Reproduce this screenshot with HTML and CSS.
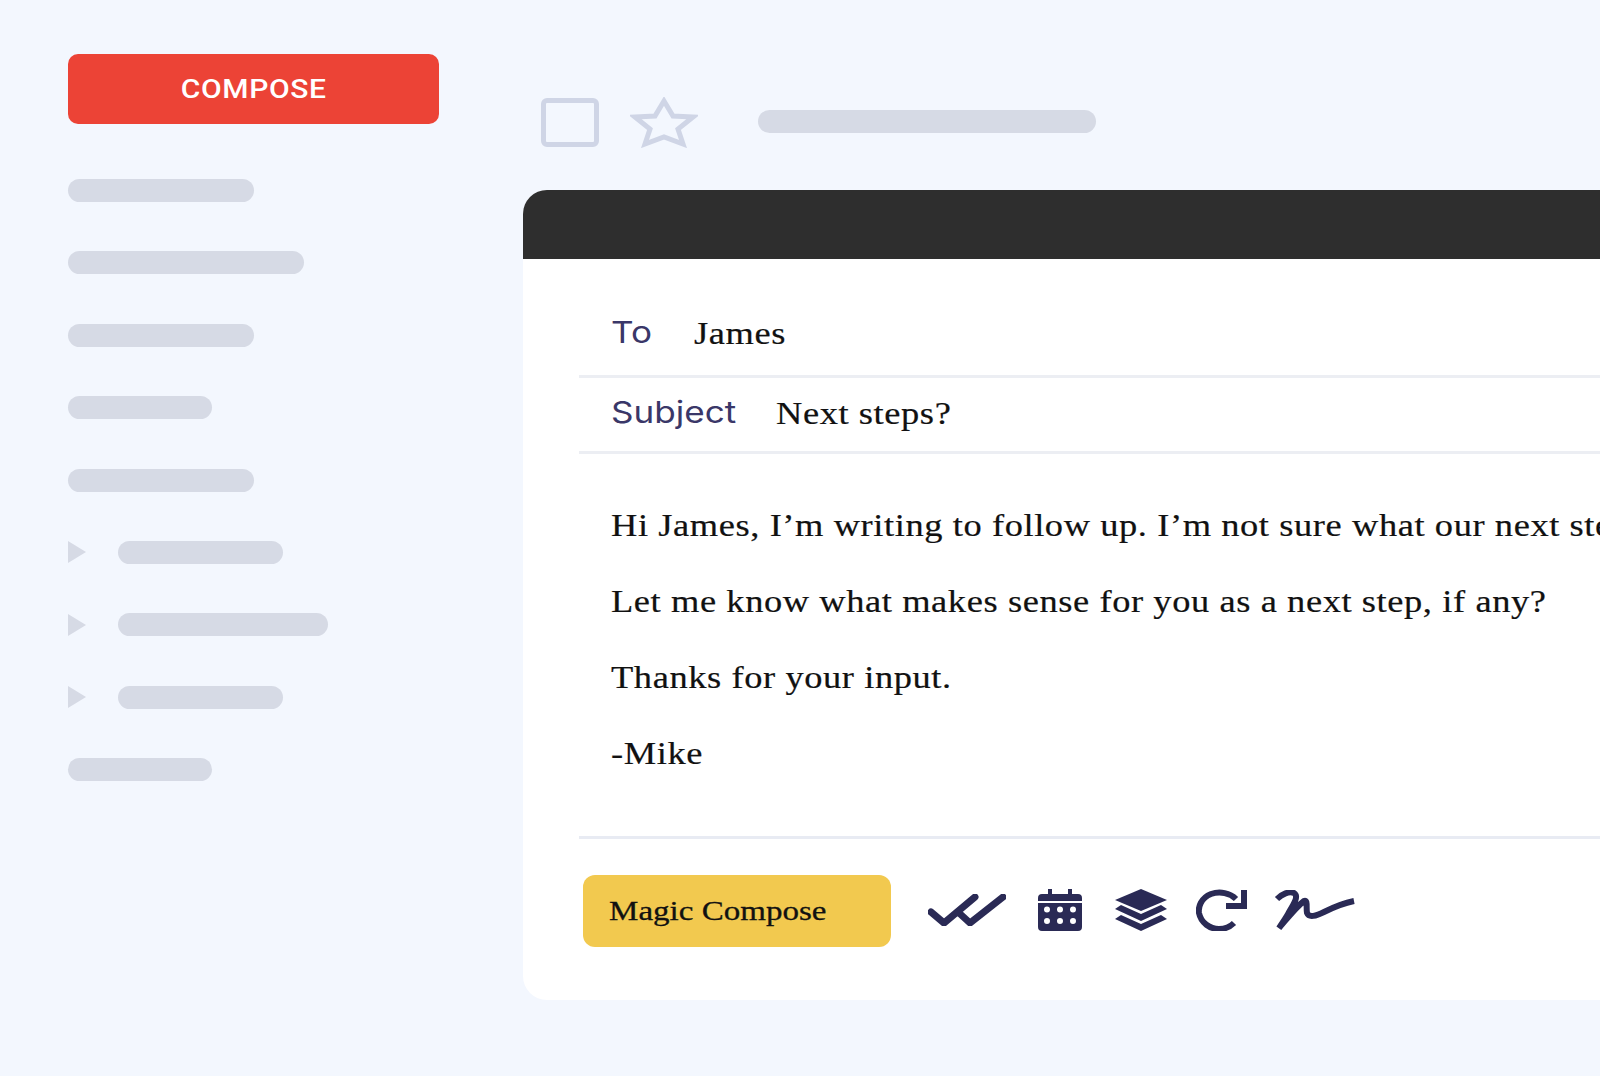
FILE: index.html
```html
<!DOCTYPE html>
<html lang="en">
  <head>
    <meta charset="UTF-8" />
    <meta name="viewport" content="width=device-width, initial-scale=1.0" />
    <title>Magic Compose</title>
    <link rel="stylesheet" href="styles.css">
  </head>
  <body>
    <div class="app">
      <aside class="sidebar">
        <button class="compose-btn"><span>COMPOSE</span></button>
        <ul class="nav">
          <li class="nav-item"><span class="bar w-186"></span></li>
          <li class="nav-item"><span class="bar w-236"></span></li>
          <li class="nav-item"><span class="bar w-186"></span></li>
          <li class="nav-item"><span class="bar w-144"></span></li>
          <li class="nav-item"><span class="bar w-186"></span></li>
          <li class="nav-item"><span class="arrow"></span><span class="bar w-165"></span></li>
          <li class="nav-item"><span class="arrow"></span><span class="bar w-210"></span></li>
          <li class="nav-item"><span class="arrow"></span><span class="bar w-165"></span></li>
          <li class="nav-item"><span class="bar w-144"></span></li>
        </ul>
      </aside>

      <main class="main">
        <div class="toolbar">
          <span class="checkbox"></span>
          <svg class="star" viewBox="0 0 68 51" preserveAspectRatio="none">
            <polygon points="34 4 43 19 63 20 48 32 53 47 34 40 15 47 20 32 5 20 25 19" />
          </svg>
          <span class="bar subject-bar"></span>
        </div>

        <section class="card">
          <div class="card-head"></div>
          <div class="field field-to">
            <span class="label label-to">To</span>
            <span class="value">James</span>
          </div>
          <div class="field field-subject">
            <span class="label label-subject">Subject</span>
            <span class="value">Next steps?</span>
          </div>
          <div class="message">
            <p>Hi James, I’m writing to follow up. I’m not sure what our next steps are.</p>
            <p>Let me know what makes sense for you as a next step, if any?</p>
            <p>Thanks for your input.</p>
            <p>-Mike</p>
          </div>
          <div class="card-foot">
            <button class="magic-btn"><span>Magic Compose</span></button>
            <svg class="icon icon-check" viewBox="0 0 78 32">
              <path d="M3 18 L16 29 L47 3 M30 18 L42 29 L75 3" />
            </svg>
            <svg class="icon icon-calendar" viewBox="0 0 44 42">
              <path d="M10 0h4v5h16V0h4v5h6a4 4 0 0 1 4 4v3H0V9a4 4 0 0 1 4-4h6z" />
              <path fill-rule="evenodd" d="M0 14h44v24a4 4 0 0 1-4 4H4a4 4 0 0 1-4-4z M6 20.500a3 3 0 1 0 6 0a3 3 0 1 0-6 0z M19 20.500a3 3 0 1 0 6 0a3 3 0 1 0-6 0z M32 20.500a3 3 0 1 0 6 0a3 3 0 1 0-6 0z M6 32a3 3 0 1 0 6 0a3 3 0 1 0-6 0z M19 32a3 3 0 1 0 6 0a3 3 0 1 0-6 0z M32 32a3 3 0 1 0 6 0a3 3 0 1 0-6 0z" />
            </svg>
            <svg class="icon icon-layers" viewBox="0 0 52 42">
              <polygon points="26 0 52 11 26 22 0 11" />
              <polygon points="6 16 26 25 46 16 52 20 26 32 0 20" />
              <polygon points="6 26 26 35 46 26 52 30 26 42 0 30" />
            </svg>
            <svg class="icon icon-redo" viewBox="0 0 52 42">
              <path class="line" d="M40 10 C34 4 24 2 15 5 C5 9 2 18 3 24 C5 34 14 40 23 40 C29 40 34 38 38 34" />
              <path d="M45 1 h6 v19 h-21 v-6 h15 z" />
            </svg>
            <svg class="icon icon-sign" viewBox="0 0 82 40">
              <path class="line" d="M3 9 C8 4 15 1 20 3 C25 6 20 14 15 22 C12 28 8 33 5 38 C12 30 22 17 30 11 C34 9 32 18 33 23 C35 28 42 26 50 22 C60 17 70 13 80 11" />
            </svg>
          </div>
        </section>
      </main>
    </div>
  </body>
</html>
```

FILE: styles.css
```css
html,
body {
  margin: 0;
  height: 100%;
  overflow: hidden;
  background: #f3f7fe;
}

.app {
  display: flex;
  height: 1076px;
}

/* left column */
.sidebar {
  flex: 0 0 523px;
  box-sizing: border-box;
  padding: 54px 0 0 68px;
}
.compose-btn {
  display: block;
  width: 371px;
  height: 70px;
  padding: 0;
  border: 0;
  border-radius: 10px;
  background: #ec4336;
  color: #fff;
  font: 500 25px Roboto, sans-serif;
  letter-spacing: 0.5px;
}
/* the text in the shot is stretched sideways */
.compose-btn span {
  display: inline-block;
  transform: scaleX(1.2);
}
.nav {
  display: flex;
  flex-direction: column;
  gap: 49.4px;
  margin: 55px 0 0;
  padding: 0;
  list-style: none;
}
.nav-item {
  display: flex;
  align-items: center;
  height: 23px;
}
.arrow {
  width: 0;
  height: 0;
  margin-right: 32px;
  border-top: 11px solid transparent;
  border-bottom: 11px solid transparent;
  border-left: 18px solid #d6dae5;
}

.bar {
  display: block;
  height: 23px;
  border-radius: 12px;
  background: #d6dae5;
}
.w-144 { width: 144px; }
.w-165 { width: 165px; }
.w-186 { width: 186px; }
.w-210 { width: 210px; }
.w-236 { width: 236px; }

/* right column */
.main {
  flex: 1;
  min-width: 0;
  padding-top: 97px;
}
.toolbar {
  display: flex;
  align-items: center;
  height: 51px;
  padding-left: 18px;
}
.checkbox {
  box-sizing: border-box;
  width: 58px;
  height: 49px;
  border: 5px solid #cfd5e6;
  border-radius: 6px;
}
.star {
  width: 68px;
  height: 51px;
  margin-left: 31px;
  fill: none;
  stroke: #cfd5e6;
  stroke-width: 5;
}
.subject-bar {
  width: 338px;
  margin: -3px 0 0 60px;
}

.card {
  margin-top: 42px;
  height: 810px;
  border-radius: 24px 0 0 24px;
  background: #fff;
  overflow: hidden;
}
.card-head {
  height: 69px;
  background: #2e2e2e;
}
.field {
  display: flex;
  align-items: center;
  box-sizing: border-box;
  margin-left: 56px;
  padding-left: 32px;
  border-bottom: 3px solid #eceef3;
}
.field-to {
  height: 119px;
  padding-top: 34px;
}
.field-subject {
  height: 76px;
  padding-bottom: 2px;
}
.label {
  color: #3a3768;
  font: 30px Inter, sans-serif;
  transform: scaleX(1.17);
  transform-origin: left;
}
.label-to {
  width: 83px;
  margin-top: -4px;
}
.label-subject {
  width: 165px;
  margin-top: -4px;
}
.value {
  color: #111;
  font: 31px "Liberation Serif", serif;
  letter-spacing: 0.5px;
  transform: scaleX(1.175);
  transform-origin: left;
  -webkit-text-stroke: 0.2px #111;
}

.message {
  margin-left: 56px;
  padding: 34px 0 44px 32px;
  color: #111;
  font: 31px/76px "Liberation Serif", serif;
  letter-spacing: 0.5px;
  white-space: nowrap;
  border-bottom: 3px solid #e8ebf3;
  -webkit-text-stroke: 0.2px #111;
}
.message p {
  margin: 0;
  transform: scaleX(1.175);
  transform-origin: left;
}

.card-foot {
  display: flex;
  align-items: center;
  margin-left: 60px;
  padding-top: 36px;
}
.magic-btn {
  width: 308px;
  height: 72px;
  padding: 0 0 0 26px;
  border: 0;
  border-radius: 12px;
  background: #f2c94f;
  color: #111;
  font: 28px "Liberation Serif", serif;
  text-align: left;
}
.magic-btn span {
  display: inline-block;
  transform: scaleX(1.18);
  transform-origin: left;
  -webkit-text-stroke: 0.3px #111;
}

.icon {
  flex: none;
  margin-top: -3px;
  fill: #2a2a55;
}
.icon .line {
  fill: none;
  stroke: #2a2a55;
  stroke-width: 6;
}
.icon-check {
  width: 78px;
  height: 32px;
  margin-left: 37px;
  fill: none;
  stroke: #2a2a55;
  stroke-width: 7;
  stroke-linecap: round;
  stroke-linejoin: round;
}
.icon-calendar {
  width: 44px;
  height: 42px;
  margin-left: 32px;
}
.icon-layers {
  width: 52px;
  height: 42px;
  margin-left: 33px;
}
.icon-redo {
  width: 52px;
  height: 42px;
  margin-left: 29px;
}
.icon-sign {
  width: 82px;
  height: 40px;
  margin-left: 26px;
}
```
